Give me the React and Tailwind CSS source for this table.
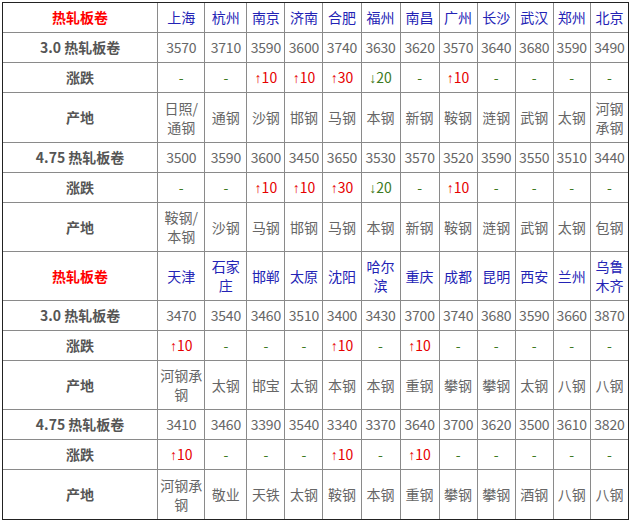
import { Fragment } from 'react';

const colWidths = [155, 47, 42, 38, 38, 38, 39, 39, 38, 38, 38, 37, 38];

const sections = [
  {
    cities: ['上海', '杭州', '南京', '济南', '合肥', '福州', '南昌', '广州', '长沙', '武汉', '郑州', '北京'],
    headerH: 'h-[30px]',
    rows: [
      {
        price: [3570, 3710, 3590, 3600, 3740, 3630, 3620, 3570, 3640, 3680, 3590, 3490],
        change: ['-', '-', '+10', '+10', '+30', '-20', '-', '+10', '-', '-', '-', '-'],
        origin: ['日照/通钢', '通钢', '沙钢', '邯钢', '马钢', '本钢', '新钢', '鞍钢', '涟钢', '武钢', '太钢', '河钢承钢'],
        originH: 'h-[50px]',
      },
      {
        price: [3500, 3590, 3600, 3450, 3650, 3530, 3570, 3520, 3590, 3550, 3510, 3440],
        change: ['-', '-', '+10', '+10', '+30', '-20', '-', '+10', '-', '-', '-', '-'],
        origin: ['鞍钢/本钢', '沙钢', '马钢', '邯钢', '马钢', '本钢', '新钢', '鞍钢', '涟钢', '武钢', '太钢', '包钢'],
        originH: 'h-[48px]',
      },
    ],
  },
  {
    cities: ['天津', '石家庄', '邯郸', '太原', '沈阳', '哈尔滨', '重庆', '成都', '昆明', '西安', '兰州', '乌鲁木齐'],
    headerH: 'h-[49px]',
    rows: [
      {
        price: [3470, 3540, 3460, 3510, 3400, 3430, 3700, 3740, 3680, 3590, 3660, 3870],
        change: ['+10', '-', '-', '-', '+10', '-', '+10', '-', '-', '-', '-', '-'],
        origin: ['河钢承钢', '太钢', '邯宝', '太钢', '本钢', '本钢', '重钢', '攀钢', '攀钢', '太钢', '八钢', '八钢'],
        originH: 'h-[48px]',
      },
      {
        price: [3410, 3460, 3390, 3540, 3340, 3370, 3640, 3700, 3620, 3500, 3610, 3820],
        change: ['+10', '-', '-', '-', '+10', '-', '+10', '-', '-', '-', '-', '-'],
        origin: ['河钢承钢', '敬业', '天铁', '太钢', '鞍钢', '本钢', '重钢', '攀钢', '攀钢', '酒钢', '八钢', '八钢'],
        originH: 'h-[50px]',
      },
    ],
  },
];

const labels = ['3.0', '4.75'];

// arrow glyph from Liberation Sans is narrow, like the original
const Arrow = ({ up }) => (
  <span className="leading-none" style={{ fontFamily: '"Liberation Sans", sans-serif' }}>
    {up ? '↑' : '↓'}
  </span>
);

const Change = ({ value }) => {
  if (value === '-') return <span className="text-[#3d7a22]">-</span>;
  if (value.startsWith('+'))
    return (
      <span className="text-[#e60000]">
        <Arrow up />
        {value.slice(1)}
      </span>
    );
  return (
    <span className="text-[#3d7a22]">
      <Arrow />
      {value.slice(1)}
    </span>
  );
};

const cell = 'border border-[#8a8a8a] px-0 py-[5px] text-center align-middle leading-[19px]';

const App = () => {
  return (
    <div
      className="bg-white w-[631px] h-[521px] pt-[2px] pl-[2px]"
      style={{ fontFamily: '"Noto Sans CJK SC", "Noto Sans", sans-serif' }}
    >
      <div className="w-[627px] border border-[#222] overflow-hidden">
        <table className="table-fixed border-collapse -m-px w-[627px] text-[14px] text-[#666]">
          <colgroup>
            {colWidths.map((w, i) => (
              <col key={i} style={{ width: w }} />
            ))}
          </colgroup>
          <tbody>
            {sections.map((section, si) => (
              <Fragment key={si}>
                {/* City header */}
                <tr className={section.headerH}>
                  <td className={`${cell} text-[#ff0000] font-bold`}>热轧板卷</td>
                  {section.cities.map((city) => (
                    <td key={city} className={`${cell} text-[#2323b5] break-all`}>
                      {city}
                    </td>
                  ))}
                </tr>

                {section.rows.map((row, ri) => (
                  <Fragment key={ri}>
                    <tr className="h-[30px]">
                      <td className={`${cell} font-bold text-[#555]`}>{labels[ri]} 热轧板卷</td>
                      {row.price.map((p, i) => (
                        <td key={i} className={`${cell} tracking-[-0.2px]`}>{p}</td>
                      ))}
                    </tr>
                    <tr className="h-[30px]">
                      <td className={`${cell} font-bold text-[#555]`}>涨跌</td>
                      {row.change.map((c, i) => (
                        <td key={i} className={cell}>
                          <Change value={c} />
                        </td>
                      ))}
                    </tr>
                    <tr className={row.originH}>
                      <td className={`${cell} font-bold text-[#555]`}>产地</td>
                      {row.origin.map((o, i) => (
                        <td key={i} className={`${cell} break-all`}>{o}</td>
                      ))}
                    </tr>
                  </Fragment>
                ))}
              </Fragment>
            ))}
          </tbody>
        </table>
      </div>
    </div>
  );
};

export default App;
